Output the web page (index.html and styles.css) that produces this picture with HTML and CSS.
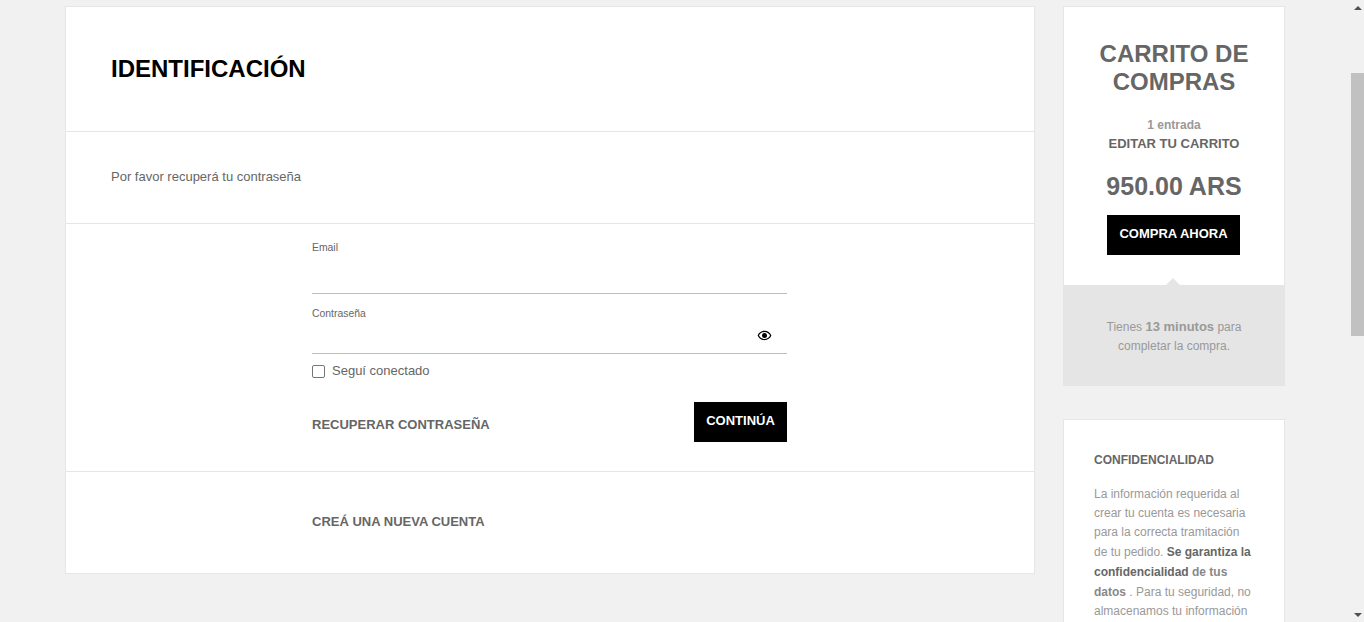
FILE: index.html
```html
<!DOCTYPE html>
<html lang="es">
<head>
    <meta charset="UTF-8">
    <meta name="viewport" content="width=device-width, initial-scale=1.0">
    <title>Identificación</title>
    <link rel="stylesheet" href="styles.css">
</head>
<body>
    <div class="page">
        <main class="login-card">
            <header class="login-head">
                <h1>IDENTIFICACIÓN</h1>
            </header>
            <section class="login-intro">
                <p>Por favor recuperá tu contraseña</p>
            </section>
            <section class="login-form">
                <form class="form-col">
                    <label class="field field-email">
                        <span class="field-label">Email</span>
                        <input type="email" class="field-input">
                    </label>
                    <label class="field field-password">
                        <span class="field-label">Contraseña</span>
                        <input type="password" class="field-input">
                        <svg class="eye" viewBox="0 0 24 24" width="15" height="15">
                            <path d="M12 6.5c3.79 0 7.17 2.13 8.82 5.5-1.65 3.37-5.02 5.5-8.82 5.5S4.83 15.37 3.18 12C4.83 8.63 8.21 6.5 12 6.5m0-2C7 4.5 2.73 7.61 1 12c1.73 4.39 6 7.5 11 7.5s9.27-3.11 11-7.5c-1.73-4.39-6-7.5-11-7.5z"/>
                            <circle cx="12" cy="12" r="4"/>
                        </svg>
                    </label>
                    <label class="remember">
                        <span class="check"></span>
                        <span>Seguí conectado</span>
                    </label>
                    <div class="form-actions">
                        <a class="link-strong" href="#">RECUPERAR CONTRASEÑA</a>
                        <button type="button" class="btn-black btn-continue">CONTINÚA</button>
                    </div>
                </form>
            </section>
            <section class="login-foot">
                <a class="link-strong" href="#">CREÁ UNA NUEVA CUENTA</a>
            </section>
        </main>

        <aside class="sidebar">
            <section class="cart-card">
                <div class="cart-top">
                    <h2>CARRITO DE COMPRAS</h2>
                    <p class="cart-count">1 entrada</p>
                    <a class="cart-edit" href="#">EDITAR TU CARRITO</a>
                    <p class="cart-total">950.00 ARS</p>
                    <button type="button" class="btn-black btn-buy">COMPRA AHORA</button>
                </div>
                <div class="cart-timer">
                    <p>Tienes <strong>13 minutos</strong> para completar la compra.</p>
                </div>
            </section>
            <section class="privacy-card">
                <h3>CONFIDENCIALIDAD</h3>
                <p>La información requerida al crear tu cuenta es necesaria para la correcta tramitación de tu pedido. <strong>Se garantiza la confidencialidad</strong> <b>de tus datos</b> . Para tu seguridad, no almacenamos tu información</p>
            </section>
        </aside>
    </div>

    <div class="scrollbar">
        <span class="arrow-up"></span>
        <span class="thumb"></span>
        <span class="arrow-down"></span>
    </div>
</body>
</html>
```

FILE: styles.css
```css
html, body {
    height: 622px;
    overflow: hidden;
}

body {
    font-family: "Liberation Sans", Arial, sans-serif;
    margin: 0;
    padding: 0;
    background-color: #f1f1f1;
    color: #666;
}

p, h1, h2, h3 {
    margin: 0;
}

a {
    text-decoration: none;
}

.page {
    display: flex;
    align-items: flex-start;
    gap: 28px;
    padding: 6px 0 0 65px;
}

/* left card */
.login-card {
    width: 968px;
    background-color: #fff;
    border: 1px solid #e6e6e6;
}

.login-head {
    height: 124px;
    padding-left: 45px;
    border-bottom: 1px solid #e6e6e6;
    display: flex;
    align-items: center;
}

.login-head h1 {
    font-size: 24px;
    line-height: 28px;
    color: #000;
}

.login-intro {
    height: 89px;
    padding: 0 0 2px 45px;
    border-bottom: 1px solid #e6e6e6;
    display: flex;
    align-items: center;
    font-size: 13px;
    color: #666;
}

.login-form {
    height: 247px;
    border-bottom: 1px solid #e6e6e6;
    padding-left: 246px;
}

.form-col {
    width: 475px;
    padding-top: 17px;
}

.field {
    display: block;
    position: relative;
    border-bottom: 1px solid #bdbdbd;
}

.field-email {
    height: 52px;
}

.field-password {
    height: 46px;
    margin-top: 13px;
}

.field-label {
    display: block;
    font-size: 10.4px;
    line-height: 13px;
    color: #666;
}

.field-input {
    display: block;
    width: 100%;
    border: 0;
    padding: 0;
    height: 24px;
    outline: none;
    background: transparent;
}

.eye {
    position: absolute;
    right: 15px;
    top: 21px;
}

.remember {
    display: flex;
    align-items: center;
    gap: 7px;
    margin-top: 8px;
    font-size: 13px;
    line-height: 18px;
    color: #666;
}

.check {
    width: 11px;
    height: 11px;
    border: 1px solid #767676;
    border-radius: 2px;
    background: #fff;
}

.form-actions {
    display: flex;
    justify-content: space-between;
    align-items: flex-start;
    margin-top: 22px;
}

.link-strong {
    font-size: 13px;
    font-weight: bold;
    line-height: 16px;
    color: #666;
}

.form-actions .link-strong {
    margin-top: 15px;
}

.btn-black {
    background-color: #000;
    color: #fff;
    border: none;
    font-family: inherit;
    font-weight: bold;
    font-size: 13px;
    padding: 0 0 4px;
    height: 40px;
    cursor: pointer;
}

.btn-continue {
    width: 93px;
}

.login-foot {
    height: 101px;
    padding: 40px 0 0 246px;
    box-sizing: border-box;
}

/* right column */
.sidebar {
    width: 222px;
}

.cart-card {
    border: 1px solid #e6e6e6;
    border-bottom: 0;
    background-color: #fff;
}

.cart-top {
    height: 278px;
    box-sizing: border-box;
    padding-top: 33px;
    text-align: center;
}

.cart-top h2 {
    font-size: 24px;
    line-height: 28px;
    width: 160px;
    margin: 0 auto;
}

.cart-count {
    margin-top: 20px;
    font-size: 12px;
    font-weight: bold;
    line-height: 18px;
    color: #999;
}

.cart-edit {
    display: block;
    font-size: 13px;
    font-weight: bold;
    line-height: 19px;
    color: #666;
}

.cart-total {
    margin-top: 19px;
    font-size: 25px;
    font-weight: bold;
    line-height: 28px;
}

.btn-buy {
    display: block;
    width: 133px;
    margin: 15px 0 0 43px;
}

.cart-timer {
    position: relative;
    margin: 0 -1px;
    height: 101px;
    box-sizing: border-box;
    padding: 32px 30px 0;
    background-color: #e5e5e5;
    text-align: center;
    font-size: 12px;
    line-height: 19px;
    color: #999;
}

.cart-timer strong {
    font-size: 13px;
}

.cart-timer:before {
    content: "";
    position: absolute;
    left: 103px;
    top: -7px;
    border-left: 7px solid transparent;
    border-right: 7px solid transparent;
    border-bottom: 7px solid #e5e5e5;
}

.privacy-card {
    margin-top: 33px;
    padding: 32px 30px 40px;
    background-color: #fff;
    border: 1px solid #e6e6e6;
    font-size: 12px;
    line-height: 19px;
    color: #999;
}

.privacy-card h3 {
    font-size: 12px;
    line-height: 16px;
    color: #666;
    margin-bottom: 17px;
}

.privacy-card strong, .privacy-card b {
    line-height: 20px;
}

.privacy-card strong {
    color: #666;
}

.privacy-card b {
    color: #888;
}

/* page scrollbar, page is shown scrolled */
.scrollbar {
    position: absolute;
    top: 0;
    right: 0;
    width: 13px;
    height: 622px;
    background-color: #f1f1f1;
}

.thumb {
    position: absolute;
    top: 73px;
    left: 0;
    width: 13px;
    height: 263px;
    background-color: #c1c1c1;
}

.arrow-up, .arrow-down {
    position: absolute;
    left: 3px;
    border-left: 4px solid transparent;
    border-right: 4px solid transparent;
}

.arrow-up {
    top: 6px;
    border-bottom: 4px solid #505050;
}

.arrow-down {
    bottom: 5px;
    border-top: 4px solid #505050;
}
```
